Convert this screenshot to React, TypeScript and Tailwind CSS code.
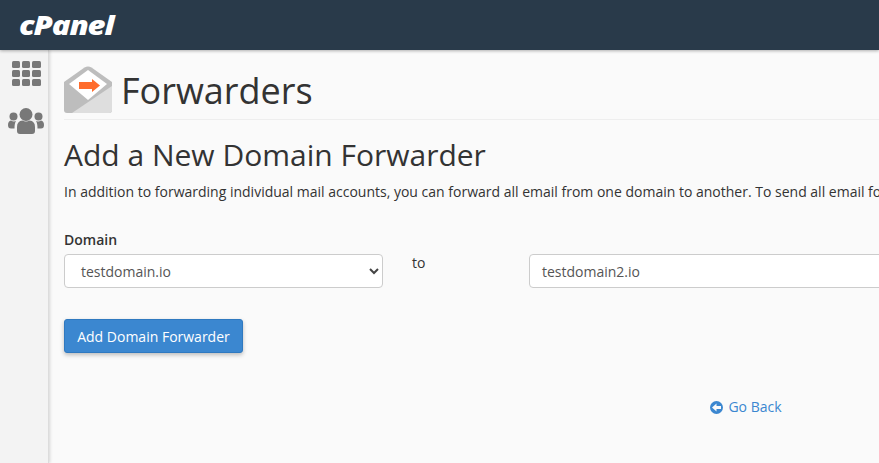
// App.tsx - cPanel "Forwarders" page
const font = { fontFamily: '"Open Sans", sans-serif' };

function EnvelopeIcon() {
  return (
    <svg width="48" height="48" viewBox="0 0 48 48" className="shrink-0">
      <path d="M0 16 20.500 1.500q3.500-2 7 0L48 16V44q0 3-3 3H3q-3 0-3-3Z" fill="#bdbdbd" />
      <path d="M5 18 24 4 43 18 24 34Z" fill="#ffffff" />
      <path d="M48 20V44q0 3-3 3H8Z" fill="#dedede" />
      <path d="M15 16h13v-3l8 6.500-8 6.500v-3H15Z" fill="#ff6c2c" />
    </svg>
  );
}

function GridIcon() {
  return (
    <div className="grid grid-cols-3 gap-[1.500px] w-[29px]">
      {Array.from({ length: 9 }).map((_, i) => (
        <div key={i} className="h-[7.300px] rounded-[1.500px] bg-[#787878]" />
      ))}
    </div>
  );
}

function UsersIcon() {
  return (
    <svg width="36" height="26" viewBox="0 0 36 26" fill="#787878">
      <circle cx="18" cy="6.500" r="6.500" />
      <path d="M9 23v-4q0-6 5.500-6.500 3.500 2 7 0Q27 13 27 19v4q0 3-3 3H12q-3 0-3-3Z" />
      <circle cx="5.500" cy="8.500" r="4" />
      <circle cx="30.500" cy="8.500" r="4" />
      <path d="M0 17q0-4 3-4.500 2.500 1.500 5 .5-1.500 2-1.500 7.500H3q-3 0-3-3.500Z" />
      <path d="M36 17q0-4-3-4.500-2.500 1.500-5 .5 1.500 2 1.500 7.500H33q3 0 3-3.500Z" />
    </svg>
  );
}

export default function App() {
  return (
    <div className="h-[463px] w-[879px] overflow-hidden flex flex-col bg-[#fafafa] text-[#333]" style={font}>
      <header className="h-[50px] shrink-0 bg-[#293a4a] flex items-center pl-[19px] shadow-[0_1px_3px_rgba(0,0,0,0.3)] z-10">
        <span className="text-white text-[27px] font-extrabold italic tracking-[-1px] leading-none -mt-[2px] scale-x-[1.15] origin-left">cPanel</span>
      </header>

      <div className="flex flex-1 min-h-0">
        <aside className="w-[49px] shrink-0 bg-[#f3f3f3] border-r border-[#dcdcdc] shadow-[1px_0_3px_rgba(0,0,0,0.15)] flex flex-col items-center pt-[11px] gap-[22px] pl-[4px]">
          <GridIcon />
          <UsersIcon />
        </aside>

        <main className="w-[1379px] shrink-0 pl-[15px]">
          <div className="flex items-center gap-[9px] h-[70px] pt-[11px] border-b border-[#eeeeee]">
            <EnvelopeIcon />
            <h1 className="text-[36px] leading-none font-normal text-[#333] mt-[2px]">Forwarders</h1>
          </div>

          <h2 className="text-[30px] leading-[33px] font-normal text-[#333] mt-[18px]">Add a New Domain Forwarder</h2>
          <p className="text-[14px] leading-[18px] mt-[12px] whitespace-nowrap">
            In addition to forwarding individual mail accounts, you can forward all email from one domain to another. To send all email for a domain to another domain, enter the names below.
          </p>

          <div className="flex mt-[30px]">
            <div className="w-[319px]">
              <label className="block text-[14px] leading-[18px] font-semibold">Domain</label>
              <div className="mt-[5px] h-[34px] bg-white border border-[#cccccc] rounded-[4px] flex items-center justify-between pl-[16px] pr-[3px] text-[14px] text-[#555]">
                <span>testdomain.io</span>
                <svg width="10" height="8" viewBox="0 0 10 8" fill="none" stroke="#444" strokeWidth="2">
                  <path d="M1 2l4 4 4-4" />
                </svg>
              </div>
            </div>
            <div className="w-[146px] pl-[29px] pt-[23px] text-[14px] leading-[18px]">to</div>
            <div className="flex-1 pt-[23px]">
              <div className="h-[34px] bg-white border border-[#cccccc] rounded-[4px] flex items-center pl-[12px] text-[14px] text-[#555]">
                testdomain2.io
              </div>
            </div>
          </div>

          <button className="block mt-[31px] h-[34px] w-[179px] bg-[#3b87d0] border border-[#2f79c0] rounded-[3px] text-white text-[14px] shadow-[0_2px_4px_rgba(0,0,0,0.25)]">
            Add Domain Forwarder
          </button>

          <div className="flex justify-center items-center gap-[5px] mt-[44px] text-[14px] leading-[20px] text-[#3b87d0]">
            <svg width="13" height="13" viewBox="0 0 13 13">
              <circle cx="6.500" cy="6.500" r="6.500" fill="#3b87d0" />
              <path d="M2 6.500 6.500 2.500v2.500h4.500v3H6.500v2.500Z" fill="#fafafa" />
            </svg>
            <span>Go Back</span>
          </div>
        </main>
      </div>
    </div>
  );
}
